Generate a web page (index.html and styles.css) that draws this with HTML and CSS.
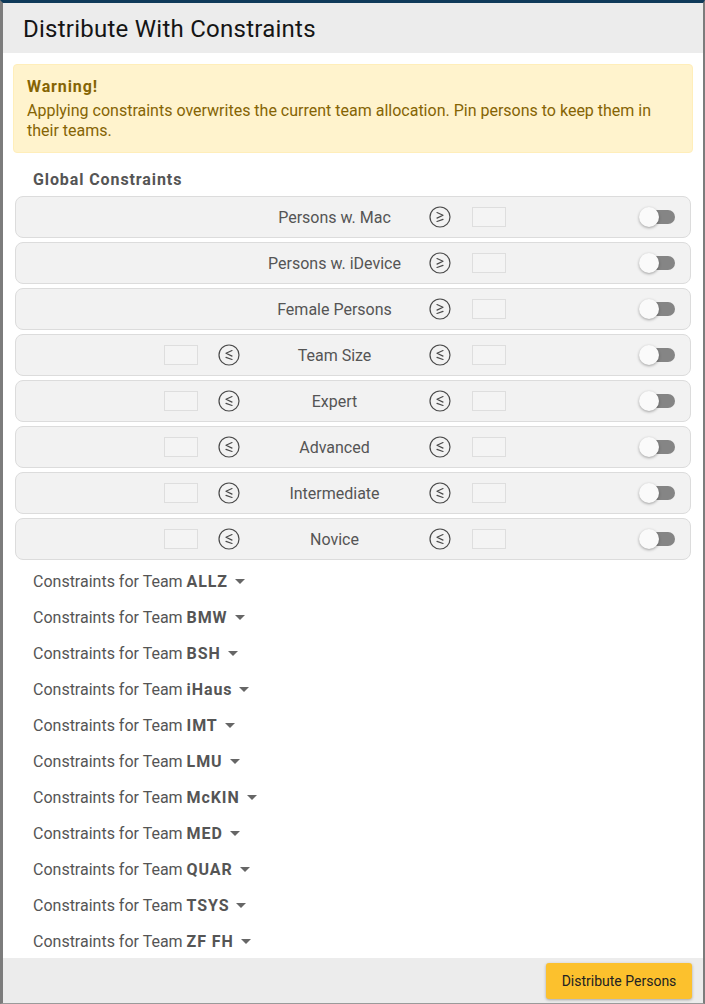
FILE: index.html
```html
<!DOCTYPE html>
<html>
<head>
<meta charset="utf-8">
<link rel="stylesheet" href="styles.css">
</head>
<body>
<div class="dialog">
  <div class="header"><h1 class="title">Distribute With Constraints</h1></div>
  <div class="content">
    <div class="warning">
      <div class="warning-title">Warning!</div>
      <div class="warning-text">Applying constraints overwrites the current team allocation. Pin persons to keep them in their teams.</div>
    </div>
    <div class="section-title">Global Constraints</div>
    <div class="rows">
      <div class="row">
        <div class="label">Persons w. Mac</div>
        <svg class="op hi-op" viewBox="0 0 22 22"><circle cx="11" cy="11" r="10" /><polyline points="8,6.5 14,9.3 8,12.1" /><line x1="8" y1="15.5" x2="14" y2="13.4" /></svg>
        <div class="num hi-num"></div>
        <div class="toggle"><span class="track"></span><span class="knob"></span></div>
      </div>
      <div class="row">
        <div class="label">Persons w. iDevice</div>
        <svg class="op hi-op" viewBox="0 0 22 22"><circle cx="11" cy="11" r="10" /><polyline points="8,6.5 14,9.3 8,12.1" /><line x1="8" y1="15.5" x2="14" y2="13.4" /></svg>
        <div class="num hi-num"></div>
        <div class="toggle"><span class="track"></span><span class="knob"></span></div>
      </div>
      <div class="row">
        <div class="label">Female Persons</div>
        <svg class="op hi-op" viewBox="0 0 22 22"><circle cx="11" cy="11" r="10" /><polyline points="8,6.5 14,9.3 8,12.1" /><line x1="8" y1="15.5" x2="14" y2="13.4" /></svg>
        <div class="num hi-num"></div>
        <div class="toggle"><span class="track"></span><span class="knob"></span></div>
      </div>
      <div class="row">
        <div class="num lo-num"></div>
        <svg class="op lo-op" viewBox="0 0 22 22"><circle cx="11" cy="11" r="10" /><polyline points="14,6.5 8,9.3 14,12.1" /><line x1="8" y1="13.4" x2="14" y2="15.5" /></svg>
        <div class="label">Team Size</div>
        <svg class="op hi-op" viewBox="0 0 22 22"><circle cx="11" cy="11" r="10" /><polyline points="14,6.5 8,9.3 14,12.1" /><line x1="8" y1="13.4" x2="14" y2="15.5" /></svg>
        <div class="num hi-num"></div>
        <div class="toggle"><span class="track"></span><span class="knob"></span></div>
      </div>
      <div class="row">
        <div class="num lo-num"></div>
        <svg class="op lo-op" viewBox="0 0 22 22"><circle cx="11" cy="11" r="10" /><polyline points="14,6.5 8,9.3 14,12.1" /><line x1="8" y1="13.4" x2="14" y2="15.5" /></svg>
        <div class="label">Expert</div>
        <svg class="op hi-op" viewBox="0 0 22 22"><circle cx="11" cy="11" r="10" /><polyline points="14,6.5 8,9.3 14,12.1" /><line x1="8" y1="13.4" x2="14" y2="15.5" /></svg>
        <div class="num hi-num"></div>
        <div class="toggle"><span class="track"></span><span class="knob"></span></div>
      </div>
      <div class="row">
        <div class="num lo-num"></div>
        <svg class="op lo-op" viewBox="0 0 22 22"><circle cx="11" cy="11" r="10" /><polyline points="14,6.5 8,9.3 14,12.1" /><line x1="8" y1="13.4" x2="14" y2="15.5" /></svg>
        <div class="label">Advanced</div>
        <svg class="op hi-op" viewBox="0 0 22 22"><circle cx="11" cy="11" r="10" /><polyline points="14,6.5 8,9.3 14,12.1" /><line x1="8" y1="13.4" x2="14" y2="15.5" /></svg>
        <div class="num hi-num"></div>
        <div class="toggle"><span class="track"></span><span class="knob"></span></div>
      </div>
      <div class="row">
        <div class="num lo-num"></div>
        <svg class="op lo-op" viewBox="0 0 22 22"><circle cx="11" cy="11" r="10" /><polyline points="14,6.5 8,9.3 14,12.1" /><line x1="8" y1="13.4" x2="14" y2="15.5" /></svg>
        <div class="label">Intermediate</div>
        <svg class="op hi-op" viewBox="0 0 22 22"><circle cx="11" cy="11" r="10" /><polyline points="14,6.5 8,9.3 14,12.1" /><line x1="8" y1="13.4" x2="14" y2="15.5" /></svg>
        <div class="num hi-num"></div>
        <div class="toggle"><span class="track"></span><span class="knob"></span></div>
      </div>
      <div class="row">
        <div class="num lo-num"></div>
        <svg class="op lo-op" viewBox="0 0 22 22"><circle cx="11" cy="11" r="10" /><polyline points="14,6.5 8,9.3 14,12.1" /><line x1="8" y1="13.4" x2="14" y2="15.5" /></svg>
        <div class="label">Novice</div>
        <svg class="op hi-op" viewBox="0 0 22 22"><circle cx="11" cy="11" r="10" /><polyline points="14,6.5 8,9.3 14,12.1" /><line x1="8" y1="13.4" x2="14" y2="15.5" /></svg>
        <div class="num hi-num"></div>
        <div class="toggle"><span class="track"></span><span class="knob"></span></div>
      </div>
    </div>
    <ul class="teams">
      <li class="team">Constraints for Team <b>ALLZ</b><span class="caret"></span></li>
      <li class="team">Constraints for Team <b>BMW</b><span class="caret"></span></li>
      <li class="team">Constraints for Team <b>BSH</b><span class="caret"></span></li>
      <li class="team">Constraints for Team <b>iHaus</b><span class="caret"></span></li>
      <li class="team">Constraints for Team <b>IMT</b><span class="caret"></span></li>
      <li class="team">Constraints for Team <b>LMU</b><span class="caret"></span></li>
      <li class="team">Constraints for Team <b>McKIN</b><span class="caret"></span></li>
      <li class="team">Constraints for Team <b>MED</b><span class="caret"></span></li>
      <li class="team">Constraints for Team <b>QUAR</b><span class="caret"></span></li>
      <li class="team">Constraints for Team <b>TSYS</b><span class="caret"></span></li>
      <li class="team">Constraints for Team <b>ZF FH</b><span class="caret"></span></li>
    </ul>
  </div>
  <div class="footer">
    <button class="btn-primary">Distribute Persons</button>
  </div>
</div>
</body>
</html>
```

FILE: styles.css
```css
html, body {
  margin: 0;
  padding: 0;
  background: #ffffff;
}
body {
  font-family: Roboto, "Liberation Sans", sans-serif;
}
.dialog {
  width: 705px;
  height: 1004px;
  box-sizing: border-box;
  border-top: 3px solid #0f3a5a;
  border-left: 3px solid #7c7c7c;
  border-right: 2px solid #7c7c7c;
  border-bottom: 1px solid #9a9a9a;
  display: flex;
  flex-direction: column;
  overflow: hidden;
}
.header {
  background: #ececec;
  height: 50px;
  flex: none;
  display: flex;
  align-items: center;
  padding-left: 20px;
}
.title {
  margin: 0;
  margin-top: 2px;
  font-size: 24px;
  font-weight: 400;
  color: #151515;
  letter-spacing: 0.25px;
}
.content {
  flex: 1;
  padding: 11px 10px 0 10px;
  overflow: hidden;
}
.warning {
  background: #fff3cd;
  border: 1px solid #ffeeba;
  border-radius: 4px;
  color: #856404;
  padding: 12px 13px 11px 13px;
  font-size: 16px;
  line-height: 20px;
}
.warning-title {
  font-weight: 700;
  letter-spacing: 0.9px;
  margin-bottom: 4px;
}
.section-title {
  margin-top: 17px;
  padding-left: 20px;
  font-size: 16px;
  line-height: 20px;
  font-weight: 700;
  letter-spacing: 0.9px;
  color: #555;
}
.rows {
  margin: 6px 2px 0 2px;
  display: flex;
  flex-direction: column;
  gap: 4px;
}
.row {
  height: 42px;
  box-sizing: border-box;
  background: #f2f2f2;
  border: 1px solid #dcdcdc;
  border-radius: 8px;
  display: grid;
  grid-template-columns: 148px 34px 20px 22px 189px 22px 21px 34px 1fr 36px 15px;
  align-items: center;
}
.label {
  grid-column: 5;
  grid-row: 1;
  text-align: center;
  font-size: 16px;
  color: #555;
  white-space: nowrap;
}
.num {
  height: 20px;
  box-sizing: border-box;
  border: 1px solid #dedede;
  background: #f4f4f4;
  grid-row: 1;
}
.lo-num { grid-column: 2; }
.hi-num { grid-column: 8; }
.op {
  width: 22px;
  height: 22px;
  grid-row: 1;
  fill: none;
  stroke: #4a4a4a;
  stroke-width: 1.2;
  stroke-linecap: round;
  stroke-linejoin: round;
}
.lo-op { grid-column: 4; }
.hi-op { grid-column: 6; }
.toggle {
  grid-column: 10;
  grid-row: 1;
  position: relative;
  width: 36px;
  height: 20px;
}
.track {
  position: absolute;
  left: 2px;
  top: 3px;
  width: 34px;
  height: 14px;
  border-radius: 7px;
  background: #858585;
}
.knob {
  position: absolute;
  left: 0;
  top: 0;
  width: 20px;
  height: 20px;
  border-radius: 50%;
  background: #fafafa;
  box-shadow: 0 1px 3px rgba(0,0,0,0.35);
}
.teams {
  list-style: none;
  margin: 3px 0 0 0;
  padding: 0 0 0 20px;
}
.team {
  height: 36px;
  display: flex;
  align-items: center;
  font-size: 16px;
  color: #555;
  white-space: pre;
}
.team b {
  font-weight: 700;
  letter-spacing: 0.9px;
  color: #555;
}
.caret {
  display: inline-block;
  margin-left: 7px;
  width: 0;
  height: 0;
  border-left: 5px solid transparent;
  border-right: 5px solid transparent;
  border-top: 5px solid #666;
}
.footer {
  flex: none;
  height: 45px;
  background: #ececec;
  display: flex;
  justify-content: flex-end;
  align-items: flex-start;
  padding-right: 11px;
  padding-top: 5px;
  box-sizing: border-box;
}
.btn-primary {
  width: 146px;
  height: 36px;
  background: #fcc12d;
  border: none;
  border-radius: 3px;
  box-shadow: 0 1px 3px rgba(0,0,0,0.3);
  font-family: Roboto, "Liberation Sans", sans-serif;
  font-size: 14px;
  color: #222;
  padding: 0;
}
```
